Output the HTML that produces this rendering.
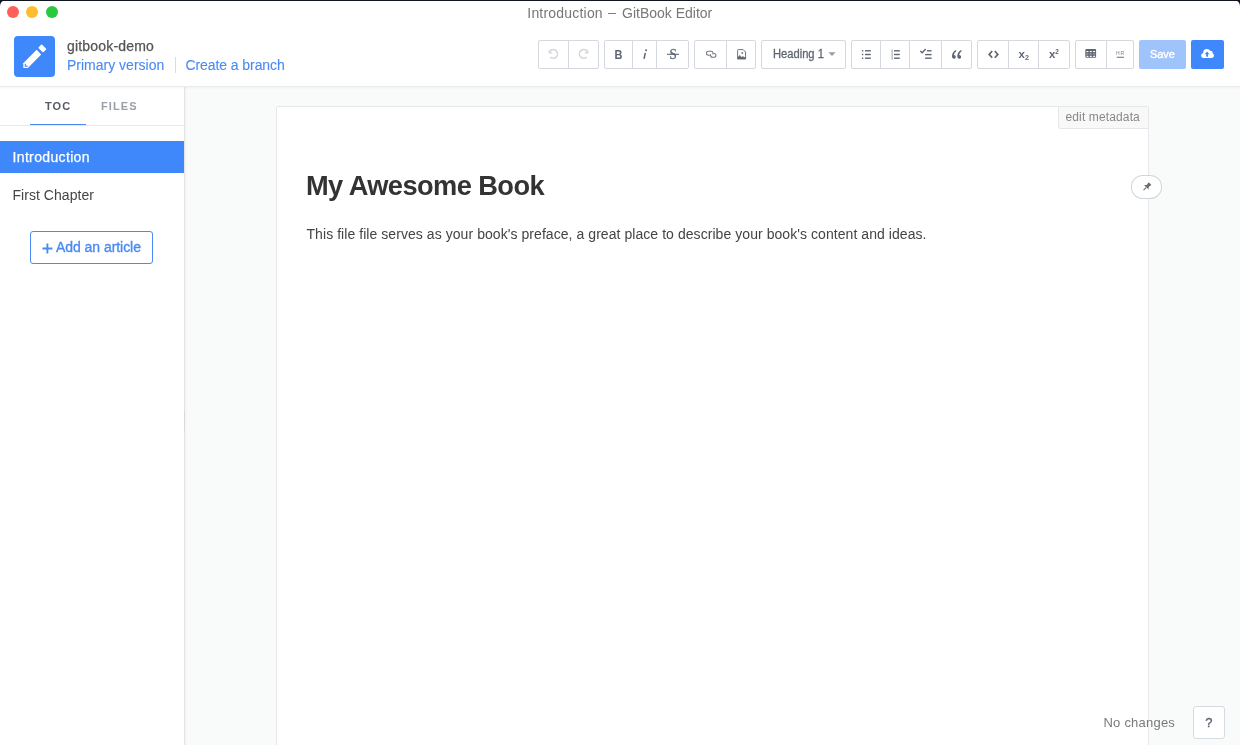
<!DOCTYPE html>
<html><head><meta charset="utf-8">
<style>
*{box-sizing:border-box;margin:0;padding:0}
html,body{width:1240px;height:745px;overflow:hidden;background:#0f1522;font-family:"Liberation Sans",sans-serif}
#win{will-change:transform;position:absolute;left:0;top:0;width:1240px;height:745px;background:#fff;border-radius:6px 6px 0 0;overflow:hidden}
#strip{position:absolute;left:0;top:0;width:1240px;height:1px;background:#0f1522}
.t{position:absolute;white-space:nowrap}
.dot{position:absolute;width:12px;height:12px;border-radius:50%}
.header{position:absolute;left:0;top:0;width:1240px;height:87px;border-bottom:1px solid #ebebeb;box-shadow:0 1px 2px rgba(0,0,0,0.045);z-index:2}
.logo{position:absolute;left:14px;top:36px;width:41px;height:41px;background:#3e88fb;border-radius:4px}
.tb{position:absolute;top:40px;height:29px;border:1px solid #d5d8de;border-radius:2px;background:#fff}
.tb>i{position:absolute;top:0;width:1px;height:27px;background:#d5d8de}
.ic{position:absolute;top:0}
.sidebar{position:absolute;left:0;top:87px;width:185px;height:658px;background:#fff;border-right:1px solid #e3e3e3}
.content{position:absolute;left:185px;top:87px;width:1055px;height:658px;background:#f9fafa;box-shadow:inset 2px 0 2px -1px rgba(0,0,0,0.03)}
.paper{position:absolute;left:276px;top:106px;width:873px;height:700px;background:#fff;border:1px solid #e5e7ea;border-radius:2px 2px 0 0}
</style></head><body>
<div id="win">
  <!-- header -->
  <div class="header">
    <div class="dot" style="left:6.5px;top:5.5px;background:#fe5f57"></div>
    <div class="dot" style="left:26px;top:5.5px;background:#febc2e"></div>
    <div class="dot" style="left:45.5px;top:5.5px;background:#28c840"></div>
    <div class="t" style="left:527.3px;top:6.4px;font-size:14px;line-height:14px;color:#777;letter-spacing:0.2px">Introduction</div>
    <div style="position:absolute;left:608.2px;top:12.6px;width:8.3px;height:1.1px;background:#808080"></div>
    <div class="t" style="left:622px;top:6.4px;font-size:14px;line-height:14px;color:#777">GitBook Editor</div>
    <div class="logo">
      <svg width="41" height="41" viewBox="0 0 41 41" style="position:absolute;left:0;top:0">
        <path d="M9.3 27.2 L22.6 13.8 L27.2 18.4 L13.9 32 L9.3 32 Z" fill="#fff"/>
        <path d="M25.2 11.7 L27.6 9.3 L31.4 13.1 L29 15.5 Z" fill="#fff" stroke="#fff" stroke-width="1.6" stroke-linejoin="round"/>
        <path d="M11.3 27.8 L11.3 30.3 L13.9 30.3" fill="none" stroke="#3e88fb" stroke-width="1.1"/>
      </svg>
    </div>
    <div class="t" style="left:67px;top:38.7px;font-size:14px;line-height:14px;color:#555;letter-spacing:0.18px;-webkit-text-stroke:0.25px #555">gitbook-demo</div>
    <div class="t" style="left:67px;top:58px;font-size:14px;line-height:14px;color:#4a8af4;-webkit-text-stroke:0.1px #4a8af4">Primary version</div>
    <div style="position:absolute;left:174.6px;top:57px;width:1.5px;height:16px;background:#dadcdf"></div>
    <div class="t" style="left:185.5px;top:58px;font-size:14px;line-height:14px;color:#4a8af4;letter-spacing:-0.08px;-webkit-text-stroke:0.1px #4a8af4">Create a branch</div>

    <!-- toolbar -->
    <div class="tb" style="left:538px;width:61px"><i style="left:29px"></i></div>
    <div class="tb" style="left:604px;width:85px"><i style="left:27px"></i><i style="left:51px"></i></div>
    <div class="tb" style="left:694px;width:62px"><i style="left:31px"></i></div>
    <div class="tb" style="left:761px;width:85px"></div>
    <div class="tb" style="left:851px;width:121px"><i style="left:28px"></i><i style="left:57px"></i><i style="left:89px"></i></div>
    <div class="tb" style="left:977px;width:93px"><i style="left:30px"></i><i style="left:60px"></i></div>
    <div class="tb" style="left:1075px;width:59px"><i style="left:30px"></i></div>
    <div style="position:absolute;left:1139px;top:40px;width:47px;height:29px;background:#9fc3fb;border-radius:2px"></div>
    <div style="position:absolute;left:1191px;top:40px;width:33px;height:29px;background:#3e88fb;border-radius:2px"></div>
    <svg style="position:absolute;left:0;top:0" width="1240" height="87" viewBox="0 0 1240 87">
      <!-- undo / redo -->
      <g fill="none" stroke="#d5d7dc" stroke-width="1.6">
        <path d="M550.2 50.9 A4.3 4.3 0 1 1 550.3 57.1"/>
        <path d="M586.8 50.9 A4.3 4.3 0 1 0 586.7 57.1"/>
      </g>
      <path d="M548.6 49.4 L548.6 53.6 L552.8 53.6 Z" fill="#d5d7dc"/>
      <path d="M588.4 49.4 L588.4 53.6 L584.2 53.6 Z" fill="#d5d7dc"/>
      <!-- B i S -->
      <text x="0" y="0" font-family="Liberation Sans" font-weight="bold" font-size="12.2" fill="#5f6673" transform="translate(614.5 59) scale(0.9 1)">B</text>
      <path d="M644 58.9 L645.3 52.8" stroke="#5f6673" stroke-width="1.5"/>
      <circle cx="646.1" cy="50.3" r="1" fill="#5f6673"/>
      <text x="0" y="0" font-family="Liberation Serif" font-size="14.6" fill="#5f6673" stroke="#5f6673" stroke-width="0.3" transform="translate(669.6 59) scale(0.9 1)">S</text>
      <path d="M667 54.3 L679 54.3" stroke="#5f6673" stroke-width="1.1"/>
      <!-- link / image -->
      <g fill="none" stroke="#70767f" stroke-width="1.1">
        <path d="M709.8 55.2 L708.5 55.2 A1.97 1.97 0 0 1 708.5 51.25 L711 51.25 A2 2 0 0 1 713 53.25 L713 54.6"/>
        <path d="M713.6 53.5 L714.6 53.5 A2 2 0 0 1 714.6 57.3 L712.5 57.3 A2 2 0 0 1 710.5 55.3 L710.5 54.2"/>
      </g>
      <path d="M737.6 58.8 L737.6 50.3 Q737.6 49.6 738.3 49.6 L743.2 49.6 L745.6 52 L745.6 58.8 Z" fill="none" stroke="#70767f" stroke-width="1" stroke-linejoin="round"/>
      <path d="M737.2 59.3 L737.2 57.8 L739.9 55 L741.2 57.1 L742.7 56.3 L746 57.8 L746 59.3 Z" fill="#646a75"/>
      <circle cx="742.3" cy="53" r="0.9" fill="#70767f"/>
      <!-- heading -->
      
      <path d="M828.4 52.2 L835.6 52.2 L832 56 Z" fill="#9b9b9b"/>
      <!-- lists -->
      <g fill="#5f6673">
        <rect x="861.9" y="50.1" width="1.4" height="1.4"/><rect x="861.9" y="53.8" width="1.4" height="1.4"/><rect x="861.9" y="57.5" width="1.4" height="1.4"/>
        <rect x="865" y="50.1" width="5.8" height="1.4"/><rect x="865" y="53.8" width="5.8" height="1.4"/><rect x="865" y="57.5" width="5.8" height="1.4"/>
        <rect x="891.5" y="49.4" width="1.2" height="10.2" opacity="0.5"/>
        <rect x="894" y="50.1" width="5.8" height="1.4"/><rect x="894" y="53.8" width="5.8" height="1.4"/><rect x="894" y="57.5" width="5.8" height="1.4"/>
        <rect x="926.9" y="50.1" width="4.7" height="1.4"/><rect x="925.1" y="53.9" width="6.5" height="1.4"/><rect x="925.1" y="57.5" width="6.5" height="1.4"/>
      </g>
      <path d="M920.3 50.9 L922.2 52.7 L925.7 49.1" fill="none" stroke="#5f6673" stroke-width="1.4"/>
      <!-- quote -->
      <g fill="#5f6673">
        <path d="M955.8 50.1 C953.6 51.4 952.1 53.4 952 55.9 C951.9 57.6 952.7 58.7 953.9 58.7 C955 58.7 955.8 57.9 955.8 56.9 C955.8 55.8 955 55.1 953.9 55.1 C954.2 53.5 955.1 52.1 956.4 51 Z"/>
        <path d="M961.1 50.1 C958.9 51.4 957.4 53.4 957.3 55.9 C957.2 57.6 958 58.7 959.2 58.7 C960.3 58.7 961.1 57.9 961.1 56.9 C961.1 55.8 960.3 55.1 959.2 55.1 C959.5 53.5 960.4 52.1 961.7 51 Z"/>
      </g>
      <!-- code -->
      <path d="M992.2 51 L989.2 54.4 L992.2 57.8 M994.8 51 L997.8 54.4 L994.8 57.8" fill="none" stroke="#5f6673" stroke-width="1.7"/>
      <text x="1018.5" y="57.9" font-family="Liberation Sans" font-weight="bold" font-size="11.5" fill="#5f6673">x</text>
      <text x="1025" y="59.9" font-family="Liberation Sans" font-weight="bold" font-size="7.2" fill="#5f6673">2</text>
      <text x="1048.9" y="57.9" font-family="Liberation Sans" font-weight="bold" font-size="11.5" fill="#5f6673">x</text>
      <text x="1055.3" y="53.7" font-family="Liberation Sans" font-weight="bold" font-size="6.4" fill="#5f6673">2</text>
      <!-- table / hr -->
      <rect x="1085.3" y="48.9" width="10.8" height="8.9" rx="1.2" fill="#5f6673"/>
      <g fill="#fff">
        <rect x="1086.4" y="51" width="2" height="1.1"/><rect x="1089.8" y="51" width="2" height="1.1"/><rect x="1093.1" y="51" width="2" height="1.1"/>
        <rect x="1086.4" y="53.4" width="2" height="1.1" opacity="0.5"/><rect x="1089.8" y="53.4" width="2" height="1.1" opacity="0.5"/><rect x="1093.1" y="53.4" width="2" height="1.1" opacity="0.5"/>
        <rect x="1086.4" y="55.8" width="2" height="1.1"/><rect x="1089.8" y="55.8" width="2" height="1.1"/><rect x="1093.1" y="55.8" width="2" height="1.1"/>
      </g>
      <text x="0" y="0" font-family="Liberation Sans" font-size="6.2" fill="#7d828b" letter-spacing="1" transform="translate(1116.1 55.2) scale(0.82 1)">HR</text>
      <rect x="1116.6" y="56.8" width="7.5" height="1.05" rx="0.5" fill="#686e78"/>
      <!-- save -->
      
      <!-- upload -->
      <g fill="#fff">
        <rect x="1203.7" y="53" width="7.7" height="5"/>
        <circle cx="1203.7" cy="55.5" r="2.5"/><circle cx="1211.4" cy="55.5" r="2.5"/>
        <circle cx="1206.8" cy="52.6" r="3.6"/><circle cx="1210.4" cy="53" r="2.3"/>
      </g>
      <g fill="#3e88fb">
        <path d="M1204.7 54.2 L1207.1 51.5 L1209.5 54.2 Z"/>
        <rect x="1206.2" y="53.6" width="1.8" height="3.1"/>
      </g>
    </svg>
    <div class="t" style="left:772.5px;top:48.3px;font-size:12px;line-height:12px;color:#5f6673;-webkit-text-stroke:0.3px #5f6673;transform:scaleX(0.93);transform-origin:0 0">Heading 1</div>
    <div class="t" style="left:1150.4px;top:48.6px;font-size:11.5px;line-height:11.5px;color:#fff;-webkit-text-stroke:0.4px #fff;transform:scaleX(0.95);transform-origin:0 0">Save</div>
  </div>

  <!-- sidebar -->
  <div class="sidebar">
    <div class="t" style="left:45px;top:13.5px;font-size:11px;line-height:11px;font-weight:bold;color:#555a63;letter-spacing:1.1px">TOC</div>
    <div class="t" style="left:101px;top:13.5px;font-size:11px;line-height:11px;font-weight:bold;color:#9aa0a8;letter-spacing:1.1px">FILES</div>
    <div class="abs" style="position:absolute;left:30px;top:37px;width:56px;height:2px;background:#4a8af4"></div>
    <div class="abs" style="position:absolute;left:0;top:38px;width:184px;height:1px;background:#e8e8e8"></div>
    <div style="position:absolute;left:0;top:53.6px;width:184px;height:32.8px;background:#3e88fb"></div>
    <div class="t" style="left:12.5px;top:63.3px;font-size:14px;line-height:14px;color:#fff;letter-spacing:0.35px;-webkit-text-stroke:0.25px #fff">Introduction</div>
    <div class="t" style="left:12.5px;top:101.2px;font-size:14px;line-height:14px;color:#444;letter-spacing:0.04px">First Chapter</div>
    <div class="abs" style="position:absolute;left:30px;top:144px;width:123px;height:33px;border:1px solid #4a8af4;border-radius:3px"></div>
    <svg style="position:absolute;left:42px;top:156px" width="11" height="11" viewBox="0 0 11 11"><path d="M5.4 0.6 L5.4 10.4 M0.4 5.5 L10.4 5.5" stroke="#4a8af4" stroke-width="1.9"/></svg>
    <div class="t" style="left:56px;top:153.2px;font-size:14px;line-height:14px;color:#4a8af4;letter-spacing:-0.05px;-webkit-text-stroke:0.35px #4a8af4">Add an article</div>
  </div>

  <div style="position:absolute;left:184px;top:411px;width:1px;height:20px;background:#d9d9d9;z-index:3"></div>
  <!-- content -->
  <div class="content"></div>
  <div class="paper">
    <div style="position:absolute;left:781px;top:0;width:90px;height:22px;background:#f8f8f9;border:1px solid #e5e7ea;border-top:none;border-right:none;border-radius:0 0 0 3px"></div>
    <div class="t" style="left:788.5px;top:4px;font-size:12px;line-height:12px;color:#888;letter-spacing:0.13px">edit metadata</div>
    <div class="t" style="left:28.5px;top:65px;font-size:28px;line-height:28px;font-weight:bold;color:#333;letter-spacing:-0.6px;transform:scaleX(0.973);transform-origin:0 0">My Awesome Book</div>
    <div class="t" style="left:29.5px;top:119.8px;font-size:14px;line-height:14px;color:#444;letter-spacing:0.06px">This file file serves as your book's preface, a great place to describe your book's content and ideas.</div>
  </div>
  <div style="position:absolute;left:1131px;top:175px;width:31px;height:24px;background:#fff;border:1px solid #d0d4db;border-radius:12px / 11.5px">
    <svg width="29" height="22" viewBox="0 0 29 22" style="position:absolute;left:0;top:0">
      <g transform="translate(14.8 10.8) rotate(45)">
        <path d="M-1.9 -4.6 L1.9 -4.6 L1.4 -1.3 L3.2 0.7 L-3.2 0.7 L-1.4 -1.3 Z" fill="#6a6a6a"/>
        <path d="M0 0.7 L0 4.6" stroke="#6a6a6a" stroke-width="1"/>
      </g>
    </svg>
  </div>
  <div class="t" style="left:1103.5px;top:716.2px;font-size:13px;line-height:13px;color:#7a7a7a;letter-spacing:0.22px">No changes</div>
  <div class="abs" style="position:absolute;left:1193px;top:706px;width:32px;height:33px;background:#fff;border:1px solid #d6dae1;border-radius:3px"></div>
  <div class="t" style="left:1205.3px;top:716.1px;font-size:13px;line-height:13px;color:#5a6270;-webkit-text-stroke:0.3px #5a6270">?</div>
</div>
<div id="strip"></div>
</body></html>
